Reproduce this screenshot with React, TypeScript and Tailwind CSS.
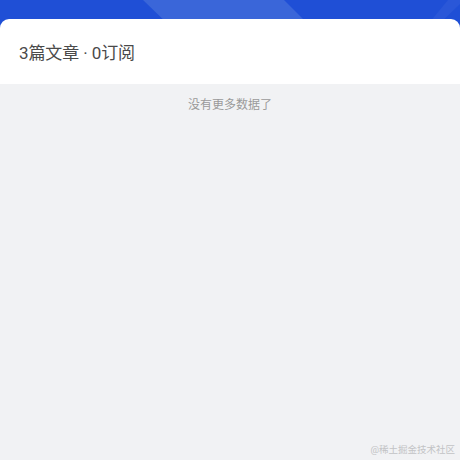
import React from 'react'

const ColumnPage = () => {
  return (
    <div
      className="relative w-[460px] h-[460px] overflow-hidden bg-[#f1f2f4]"
      style={{ fontFamily: 'Roboto, "Noto Sans CJK SC", "Noto Sans", sans-serif' }}
    >
      {/* Header banner */}
      <div className="relative h-[28px] bg-[#1f4fd6] overflow-hidden">
        <svg className="absolute inset-0" width="460" height="28" viewBox="0 0 460 28">
          <polygon points="143,0 284,0 312,28 172,28" fill="#3a66d9" />
          <polygon points="448,0 460,0 460,4 435,28 425,28" fill="#2a57d8" />
        </svg>
      </div>

      {/* Column info card */}
      <div className="relative -mt-[9px] h-[65px] bg-white rounded-t-[9px] flex items-center px-[19px] pt-[3px]">
        <span className="text-[17px] text-[#4a4a4a] leading-none tracking-[-0.1px]">3篇文章 · 0订阅</span>
      </div>

      {/* List footer */}
      <div className="pt-[13px] text-center text-[12px] leading-[16px] text-[#9a9a9a]">没有更多数据了</div>

      <div className="absolute right-[5px] bottom-[3px] text-[9.5px] text-[#c2c3c5]">@稀土掘金技术社区</div>
    </div>
  )
}

export default ColumnPage
